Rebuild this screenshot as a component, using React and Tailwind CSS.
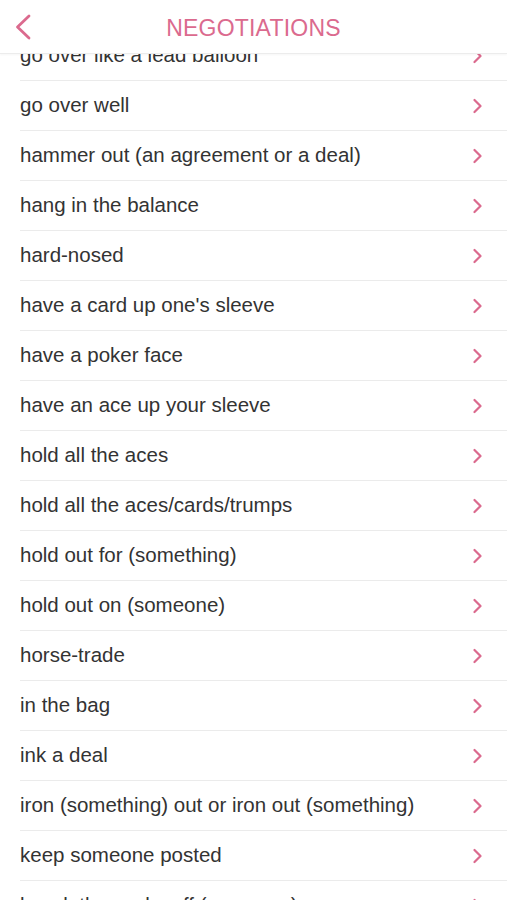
import React from 'react'

const items = [
  'go over like a lead balloon',
  'go over well',
  'hammer out (an agreement or a deal)',
  'hang in the balance',
  'hard-nosed',
  "have a card up one's sleeve",
  'have a poker face',
  'have an ace up your sleeve',
  'hold all the aces',
  'hold all the aces/cards/trumps',
  'hold out for (something)',
  'hold out on (someone)',
  'horse-trade',
  'in the bag',
  'ink a deal',
  'iron (something) out or iron out (something)',
  'keep someone posted',
  'knock the socks off (someone)',
]

const PINK = '#db6a8e'

function Chevron() {
  return (
    <svg width="10" height="16" viewBox="0 0 10 16" fill="none">
      <path d="M2.5 2l6 6-6 6" stroke={PINK} strokeWidth="2.2" strokeLinecap="round" strokeLinejoin="round" />
    </svg>
  )
}

export default function App() {
  return (
    <div
      className="w-[507px] h-[900px] bg-white overflow-hidden flex flex-col"
      style={{ fontFamily: '"Liberation Sans", Arial, sans-serif' }}
    >
      {/* header */}
      <div className="relative h-[54px] shrink-0 flex items-center justify-center pt-1 border-b border-[#ececec] shadow-[0_1px_2px_rgba(0,0,0,0.04)] z-10 bg-white">
        <button className="absolute left-[14px] top-[14px]">
          <svg width="18" height="26" viewBox="0 0 18 26" fill="none">
            <path d="M15 2L3.5 13 15 24" stroke={PINK} strokeWidth="2.8" strokeLinecap="round" strokeLinejoin="round" />
          </svg>
        </button>
        <h1 className="text-[23px] tracking-[0.2px] text-[#db6a8e] leading-none">NEGOTIATIONS</h1>
      </div>

      {/* list */}
      <div className="flex-1 overflow-hidden">
        <ul className="-mt-[23px]">
          {items.map((t) => (
            <li key={t} className="pl-5">
              <div className="h-[50px] flex items-center justify-between pr-[25px] border-b border-[#ebebeb]">
                <span className="text-[20.5px] text-[#333333] whitespace-nowrap">{t}</span>
                <Chevron />
              </div>
            </li>
          ))}
        </ul>
      </div>
    </div>
  )
}
